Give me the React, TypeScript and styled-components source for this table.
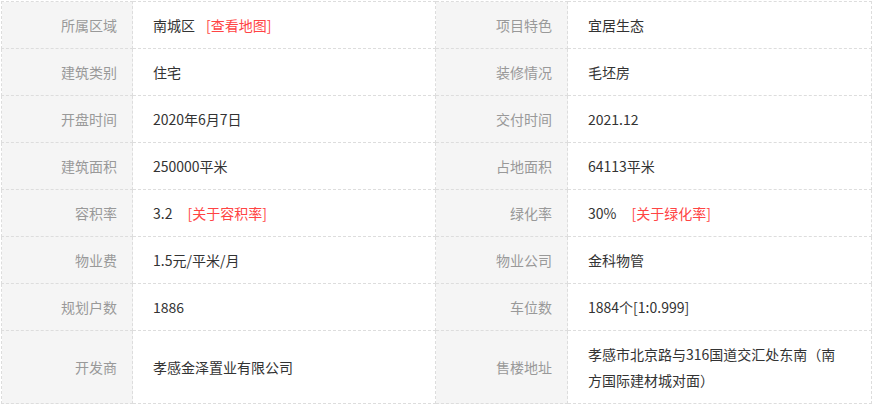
import styled, { createGlobalStyle } from "styled-components";

const GlobalStyle = createGlobalStyle`
  body {
    margin: 0;
    background: #fff;
    font-family: "Microsoft YaHei", "Noto Sans CJK SC", "Noto Sans", sans-serif;
  }
`;

const Wrapper = styled.div`
  padding: 1px;
`;

const InfoTable = styled.table`
  width: 870px;
  border-collapse: collapse;
  table-layout: fixed;
  font-size: 14px;
  line-height: 26px;
`;

const Col = styled.col<{ $width: number }>`
  width: ${(p) => p.$width}px;
`;

const Label = styled.th`
  padding: 10px 15px 10px 10px;
  border: 1px dashed #ddd;
  background-color: #f5f5f5;
  color: #999;
  font-weight: normal;
  text-align: right;
  vertical-align: middle;
`;

const Value = styled.td`
  padding: 10px 30px 10px 20px;
  border: 1px dashed #ddd;
  color: #333;
  text-align: left;
  vertical-align: middle;
  word-break: break-all;
`;

const MoreLink = styled.a<{ $gap?: number }>`
  margin-left: ${(p) => p.$gap ?? 10}px;
  color: #f44;
  text-decoration: none;
`;

type Field = {
  label: string;
  value: string;
  link?: string;
  gap?: number;
};

const rows: [Field, Field][] = [
  [
    { label: "所属区域", value: "南城区", link: "[查看地图]", gap: 11 },
    { label: "项目特色", value: "宜居生态" },
  ],
  [
    { label: "建筑类别", value: "住宅" },
    { label: "装修情况", value: "毛坯房" },
  ],
  [
    { label: "开盘时间", value: "2020年6月7日" },
    { label: "交付时间", value: "2021.12" },
  ],
  [
    { label: "建筑面积", value: "250000平米" },
    { label: "占地面积", value: "64113平米" },
  ],
  [
    { label: "容积率", value: "3.2", link: "[关于容积率]", gap: 15 },
    { label: "绿化率", value: "30%", link: "[关于绿化率]", gap: 15 },
  ],
  [
    { label: "物业费", value: "1.5元/平米/月" },
    { label: "物业公司", value: "金科物管" },
  ],
  [
    { label: "规划户数", value: "1886" },
    { label: "车位数", value: "1884个[1:0.999]" },
  ],
  [
    { label: "开发商", value: "孝感金泽置业有限公司" },
    { label: "售楼地址", value: "孝感市北京路与316国道交汇处东南（南方国际建材城对面）" },
  ],
];

function Cells({ field }: { field: Field }) {
  return (
    <>
      <Label>{field.label}</Label>
      <Value>
        {field.value}
        {field.link && <MoreLink href="#" $gap={field.gap}>{field.link}</MoreLink>}
      </Value>
    </>
  );
}

export default function App() {
  return (
    <Wrapper>
      <GlobalStyle />
      <InfoTable>
        <colgroup>
          <Col $width={131} />
          <Col $width={303} />
          <Col $width={132} />
          <Col $width={304} />
        </colgroup>
        <tbody>
          {rows.map(([left, right]) => (
            <tr key={left.label}>
              <Cells field={left} />
              <Cells field={right} />
            </tr>
          ))}
        </tbody>
      </InfoTable>
    </Wrapper>
  );
}
